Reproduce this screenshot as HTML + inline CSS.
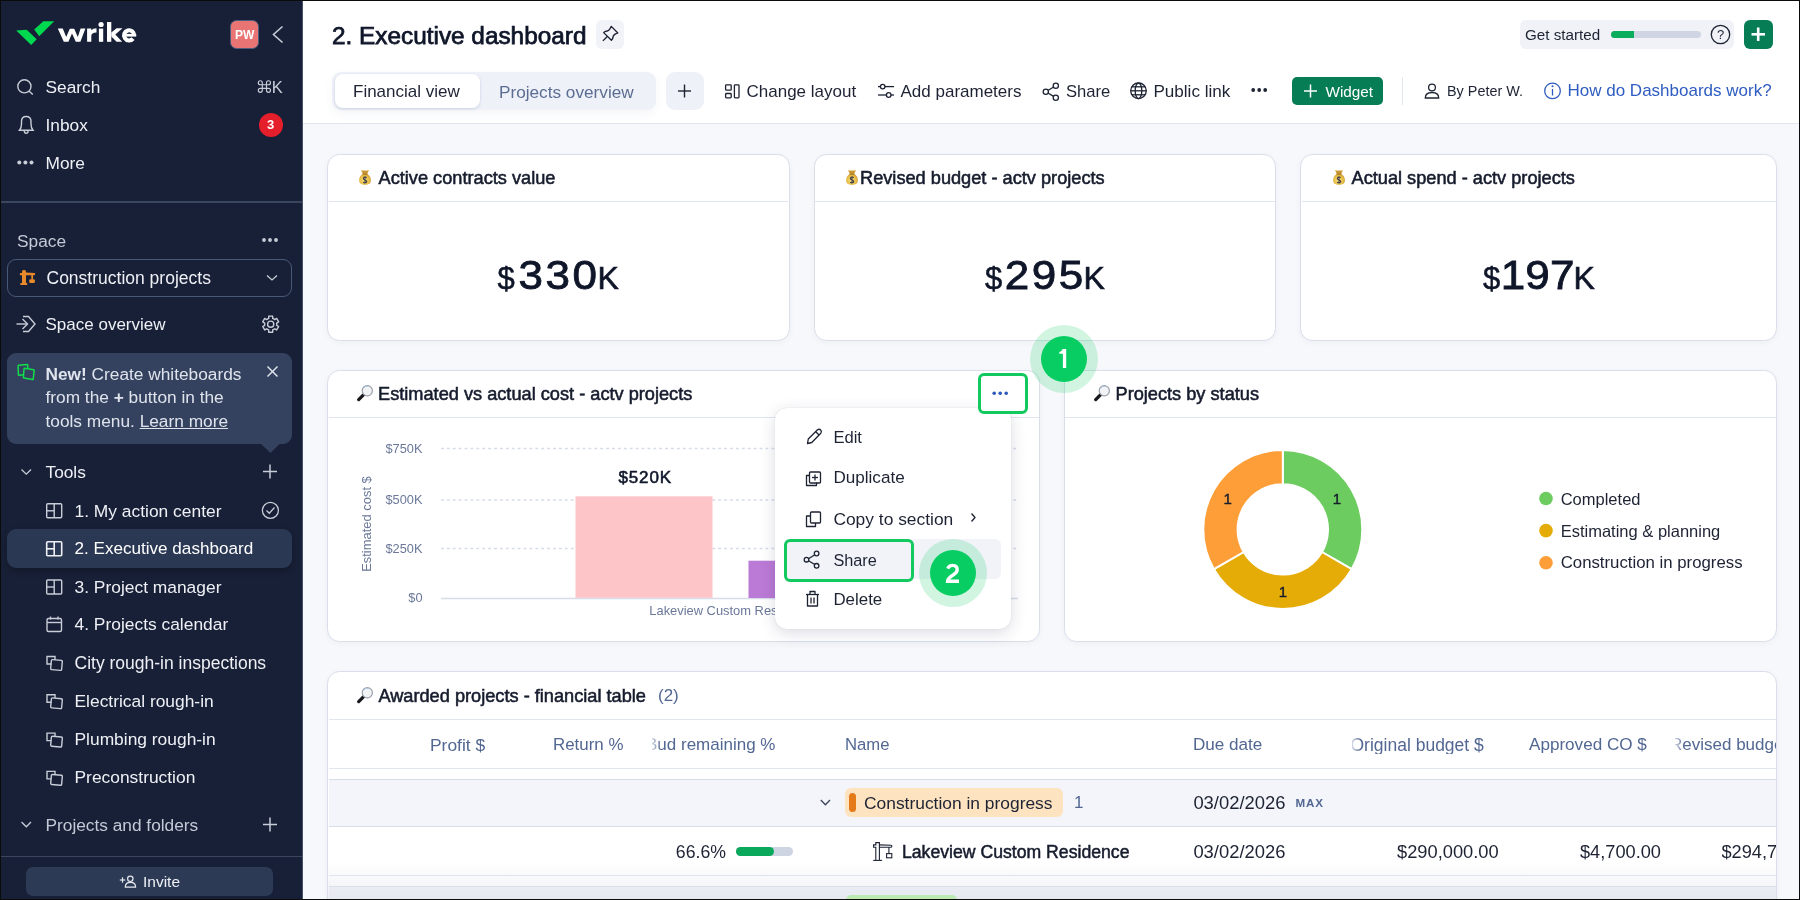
<!DOCTYPE html>
<html><head><meta charset="utf-8">
<style>
*{box-sizing:border-box;margin:0;padding:0}
html,body{width:1800px;height:900px;overflow:hidden;background:#0b0b0b}
body{font-family:"Liberation Sans",sans-serif;position:relative}
.a{position:absolute}
.t{position:absolute;white-space:nowrap;line-height:20px;height:20px}
svg{position:absolute;overflow:visible}
.card{position:absolute;background:#fff;border:1.4px solid #d9deea;border-radius:12.5px;box-shadow:0 2px 6px rgba(30,40,80,.04)}
.ct{font-weight:normal;font-size:18.2px;color:#161c2d;-webkit-text-stroke:.55px #161c2d}
.kb{font-size:31px;line-height:40px;height:40px;color:#0f1629;-webkit-text-stroke:.5px #0f1629}
.kd{font-size:44px;line-height:44px;height:44px;color:#0f1629;letter-spacing:2.5px;-webkit-text-stroke:.9px #0f1629;transform:scaleY(.94);transform-origin:0 37.2px}
.kk{font-size:32px;line-height:40px;height:40px;color:#0f1629;-webkit-text-stroke:.6px #0f1629}
</style></head><body><div id="root" style="position:absolute;left:0;top:0;width:1800px;height:900px;will-change:transform">
<div class="a" style="left:1px;top:1px;width:1798px;height:898px;background:#f7f8fb"></div>
<!-- SIDEBAR -->
<div class="a" style="left:1px;top:1px;width:301px;height:898px;background:#182037"></div>
<svg style="left:0;top:0" width="1" height="1"><polygon points="16.2,30.4 26.7,29.8 36.7,39.2 31.2,45" fill="#00d94f"/><polygon points="34.2,29.6 43.3,21.2 54.2,21.2 39.2,36.2" fill="#00d94f"/></svg>
<svg style="left:0;top:0" width="1" height="1" fill="#fff">
<polygon points="57.8,28.4 62.8,28.4 66.2,37 69.8,28.8 74.2,28.8 77.8,37 80.6,28.4 85.4,28.4 80.4,41.8 75.8,41.8 72,33.4 68.4,41.8 63.8,41.8"/>
<path d="M87.1,28.6 L91.3,28.6 L91.3,30.3 Q92.8,28.2 96.5,28.2 L96.5,32.4 Q91.3,32.4 91.3,36 L91.3,41.8 L87.1,41.8 Z"/>
<circle cx="101.1" cy="24.5" r="2.6"/><rect x="98.9" y="28.6" width="4.3" height="13.2"/>
<rect x="107" y="22" width="4.3" height="19.8"/><polygon points="111.3,32.6 116.6,28.3 122.5,28.3 115.3,34.6 122.2,41.8 116.6,41.8 111.3,36.6"/>
</svg>
<svg style="left:0;top:0" width="1" height="1"><path d="M133,38.6 A5.05,5.05 0 1 1 134.15,35.6" stroke="#fff" stroke-width="4.1" fill="none"/><rect x="124" y="33.9" width="12.2" height="2.7" fill="#fff"/></svg>
<div class="a" style="left:230.4px;top:20.2px;width:28.5px;height:28.6px;border-radius:6.5px;background:#e87474;border:1px solid #4a5f80"></div>
<div class="t" style="left:230.5px;top:24.5px;width:28.5px;text-align:center;font-size:12px;font-weight:bold;color:#fff">PW</div>
<svg style="left:0;top:0" width="1" height="1"><polyline points="282.5,26.5 273.5,34.5 282.5,42.5" fill="none" stroke="#c8cdda" stroke-width="1.6"/></svg>

<svg style="left:0;top:0" width="1" height="1" fill="none" stroke="#c8cdd8" stroke-width="1.4">
<circle cx="24.4" cy="86.3" r="6.6"/><line x1="29.2" y1="91.2" x2="32.8" y2="94.6"/>
<path d="M19.5,130.3 L33,130.3 Q31,128 31,124 L31,121.5 Q31,116.5 26.2,116.5 Q21.5,116.5 21.5,121.5 L21.5,124 Q21.5,128 19.5,130.3 Z"/><path d="M24.3,131 Q24.3,133.3 26.2,133.3 Q28.1,133.3 28.1,131"/>
</svg>
<svg style="left:0;top:0" width="1" height="1" fill="#c8cdd8"><circle cx="19.3" cy="162.5" r="2"/><circle cx="25.4" cy="162.5" r="2"/><circle cx="31.5" cy="162.5" r="2"/></svg>
<div class="t" style="left:45.5px;top:77px;font-size:17.3px;color:#eef0f5">Search</div>
<svg style="left:0;top:0" width="1" height="1" fill="none" stroke="#c8cdd8" stroke-width="1.15"><path d="M262.3,82.7 A2,2 0 1 0 260.3,84.7 M266.5,82.7 A2,2 0 1 1 268.5,84.7 M260.3,88.3 A2,2 0 1 0 262.3,90.3 M268.5,88.3 A2,2 0 1 1 266.5,90.3 M262.3,82.7 V90.3 M266.5,82.7 V90.3 M260.3,84.7 H268.5 M260.3,88.3 H268.5"/></svg>
<div class="t" style="left:271.7px;top:77px;font-size:16.5px;color:#c8cdd8">K</div>
<div class="t" style="left:45.5px;top:115px;font-size:17.3px;color:#eef0f5">Inbox</div>
<div class="a" style="left:258.5px;top:113px;width:24px;height:24px;border-radius:50%;background:#e41e2b"></div>
<div class="t" style="left:258.5px;top:115px;width:24px;text-align:center;font-size:13px;font-weight:bold;color:#fff">3</div>
<div class="t" style="left:45.5px;top:153px;font-size:17.3px;color:#eef0f5">More</div>
<div class="a" style="left:1px;top:201px;width:301px;height:2px;background:#3a465e"></div>

<div class="t" style="left:17px;top:230.5px;font-size:17.3px;color:#c3c9d6">Space</div>
<svg style="left:0;top:0" width="1" height="1" fill="#c8cdd8"><circle cx="264" cy="240" r="1.9"/><circle cx="270" cy="240" r="1.9"/><circle cx="276" cy="240" r="1.9"/></svg>
<div class="a" style="left:7px;top:258.5px;width:285px;height:38px;border-radius:9px;border:1px solid #4a5877"></div>
<svg style="left:0;top:0" width="1" height="1" fill="#e8892a">
<path d="M22,271.5 Q22,270 23.5,270 L24.5,270 Q26,270 26,271.5 L26,283 L27.2,283 L27.2,285 L20.4,285 L20.4,283 L22,283 L22,275.3 L19.9,275.3 L19.9,273 L22,273 Z"/>
<path d="M26,272.6 L34.5,273 Q35,273 35,273.6 L35,274.6 Q35,275.2 34.5,275.2 L26,275.2 Z"/>
<rect x="31.3" y="275" width="1.7" height="4.5"/><rect x="29.2" y="279.2" width="5.7" height="3.8" rx="1.3"/>
</svg>
<div class="t" style="left:46.5px;top:267.8px;font-size:17.5px;color:#eef0f5">Construction projects</div>
<svg style="left:0;top:0" width="1" height="1"><polyline points="267,275.5 272,280 277,275.5" fill="none" stroke="#c8cdda" stroke-width="1.3"/></svg>

<svg style="left:0;top:0" width="1" height="1" fill="none" stroke="#c8cdd8" stroke-width="1.4">
<line x1="16.5" y1="324" x2="27" y2="324"/><polyline points="22.5,319 27.5,324 22.5,329"/><path d="M23,316.5 L28.5,316.5 L35,324 L28.5,331.5 L23,331.5"/>
</svg>
<div class="t" style="left:45.5px;top:314.8px;font-size:17px;color:#eef0f5">Space overview</div>
<svg style="left:0;top:0" width="1" height="1" fill="none" stroke="#c8cdd8" stroke-width="1.4">
<circle cx="270.7" cy="324.2" r="3.1"/>
<path stroke-linejoin="round" d="M267.65,318.92 L268.71,318.43 L268.69,316.15 L272.71,316.15 L272.69,318.43 L273.75,318.92 L274.70,319.60 L276.67,318.43 L278.68,321.91 L276.69,323.04 L276.80,324.20 L276.69,325.36 L278.68,326.49 L276.67,329.97 L274.70,328.80 L273.75,329.48 L272.69,329.97 L272.71,332.25 L268.69,332.25 L268.71,329.97 L267.65,329.48 L266.70,328.80 L264.73,329.97 L262.72,326.49 L264.71,325.36 L264.60,324.20 L264.71,323.04 L262.72,321.91 L264.73,318.43 L266.70,319.60 Z"/>
</svg>

<div class="a" style="left:7px;top:353px;width:285px;height:90.5px;border-radius:9px;background:#34425f"></div>
<svg style="left:0;top:0" width="1" height="1"><polygon points="260,443 280.5,443 270.5,453" fill="#34425f"/></svg>
<svg style="left:0;top:0" width="1" height="1" fill="none" stroke="#22c55e" stroke-width="1.5">
<path d="M23.6,374.8 L19,375.3 Q18.4,375.3 18.4,374.7 L18.1,366 Q18.1,365.4 18.7,365.3 L27,364.5 Q27.6,364.5 27.7,365.1 L27.9,368.4" stroke="#12dd4c"/><path d="M24.7,368.3 L33.5,369.7 Q34.2,369.8 34.1,370.5 L33.3,378.8 Q33.2,379.5 32.5,379.4 L24,378 Q23.3,377.9 23.4,377.2 L24,368.9 Q24.1,368.2 24.7,368.3 Z" stroke="#12dd4c"/>
</svg>
<div class="t" style="left:45.5px;top:363.7px;font-size:17.3px;color:#dfe3ec"><b>New!</b> Create whiteboards</div>
<div class="t" style="left:45.5px;top:387.3px;font-size:17.3px;color:#dfe3ec">from the <b>+</b> button in the</div>
<div class="t" style="left:45.5px;top:411px;font-size:17.3px;color:#dfe3ec">tools menu. <span style="text-decoration:underline">Learn more</span></div>
<svg style="left:0;top:0" width="1" height="1" fill="none" stroke="#dfe3ec" stroke-width="1.5"><line x1="267.5" y1="366.5" x2="277.5" y2="376.5"/><line x1="277.5" y1="366.5" x2="267.5" y2="376.5"/></svg>

<svg style="left:0;top:0" width="1" height="1" fill="none" stroke="#c8cdda" stroke-width="1.3"><polyline points="21.5,469.5 26.3,474.2 31,469.5"/><polyline points="21.5,822 26.3,826.8 31,822"/></svg>
<div class="t" style="left:45.5px;top:462px;font-size:17.3px;color:#eef0f5">Tools</div>
<svg style="left:0;top:0" width="1" height="1" fill="none" stroke="#c8cdd8" stroke-width="1.5"><line x1="263" y1="471.5" x2="277" y2="471.5"/><line x1="270" y1="464.5" x2="270" y2="478.5"/><line x1="263" y1="824.5" x2="277" y2="824.5"/><line x1="270" y1="817.5" x2="270" y2="831.5"/></svg>

<div class="a" style="left:7px;top:529px;width:285px;height:38.5px;border-radius:9px;background:#2b3853;box-shadow:0 3px 6px rgba(0,0,0,.25)"></div>
<svg style="left:0;top:0" width="1" height="1" fill="none" stroke="#c8cdd8" stroke-width="1.4">
<rect x="46.7" y="503.8" width="15" height="14" rx="1"/><line x1="54.2" y1="503.8" x2="54.2" y2="517.8"/><line x1="46.7" y1="510.8" x2="54.2" y2="510.8"/>
<rect x="46.7" y="541.8" width="15" height="14" rx="1" stroke="#eef0f5" stroke-width="1.6"/><line x1="54.2" y1="541.8" x2="54.2" y2="555.8" stroke="#eef0f5" stroke-width="1.6"/><line x1="46.7" y1="548.8" x2="54.2" y2="548.8" stroke="#eef0f5" stroke-width="1.6"/>
<rect x="46.7" y="580" width="15" height="14" rx="1"/><line x1="54.2" y1="580" x2="54.2" y2="594"/><line x1="46.7" y1="587" x2="54.2" y2="587"/>
<rect x="47" y="618.5" width="14.5" height="13" rx="1.5"/><line x1="47" y1="622.5" x2="61.5" y2="622.5"/><line x1="50.5" y1="616.5" x2="50.5" y2="619.5"/><line x1="58" y1="616.5" x2="58" y2="619.5"/>
</svg>
<svg style="left:0;top:0" width="1" height="1" fill="none" stroke="#c8cdd8" stroke-width="1.4">
<g id="cpy"><path d="M51.5,664 L47,664 L47,656.5 L55,656.5 L55,660"/><rect x="51" y="660" width="11" height="10" rx="1" transform="rotate(5 56.5 665)"/></g>
<use href="#cpy" y="38.3"/><use href="#cpy" y="76.6"/><use href="#cpy" y="114.9"/>
</svg>
<div class="t" style="left:74.5px;top:500.7px;font-size:17.4px;color:#eef0f5">1. My action center</div>
<div class="t" style="left:74.5px;top:538.5px;font-size:17.1px;color:#fff">2. Executive dashboard</div>
<div class="t" style="left:74.5px;top:577px;font-size:17.4px;color:#eef0f5">3. Project manager</div>
<div class="t" style="left:74.5px;top:614.4px;font-size:17.4px;color:#eef0f5">4. Projects calendar</div>
<div class="t" style="left:74.5px;top:652.7px;font-size:17.5px;color:#eef0f5">City rough-in inspections</div>
<div class="t" style="left:74.5px;top:691px;font-size:17.4px;color:#eef0f5">Electrical rough-in</div>
<div class="t" style="left:74.5px;top:729px;font-size:17.4px;color:#eef0f5">Plumbing rough-in</div>
<div class="t" style="left:74.5px;top:767px;font-size:17.4px;color:#eef0f5">Preconstruction</div>
<svg style="left:0;top:0" width="1" height="1" fill="none" stroke="#c8cdd8" stroke-width="1.3"><circle cx="270.4" cy="510.4" r="8"/><polyline points="266.5,510.5 269.3,513.3 274.5,507.5"/></svg>

<div class="t" style="left:45.5px;top:814.8px;font-size:17.3px;color:#c3c9d6">Projects and folders</div>
<div class="a" style="left:1px;top:855.5px;width:301px;height:1px;background:#3a465e"></div>
<div class="a" style="left:26px;top:867px;width:247px;height:28.5px;border-radius:7px;background:#2c3a55"></div>
<svg style="left:0;top:0" width="1" height="1" fill="none" stroke="#e6e9f0" stroke-width="1.2">
<line x1="119.8" y1="880" x2="125.2" y2="880"/><line x1="122.5" y1="877.3" x2="122.5" y2="882.7"/>
<circle cx="130.3" cy="878.8" r="2.7"/><path d="M125.3,887.2 Q125.3,882.4 130.4,882.4 Q135.6,882.4 135.6,887.2 Z"/>
</svg>
<div class="t" style="left:143px;top:871.7px;font-size:15.5px;color:#eef0f5">Invite</div>
<div class="a" style="left:301.6px;top:1px;width:1.2px;height:898px;background:#46526b"></div>

<!-- HEADER -->
<div class="a" style="left:303px;top:1px;width:1496px;height:123px;background:#fff;border-bottom:1px solid #e1e5ef"></div>
<div class="t" style="left:332px;top:25.6px;line-height:20px;font-size:24.35px;color:#0f1629;-webkit-text-stroke:.75px #0f1629">2. Executive dashboard</div>
<div class="a" style="left:596px;top:20px;width:28px;height:29px;border-radius:6px;background:#f1f3f8"></div>
<svg style="left:0;top:0" width="1" height="1" fill="none" stroke="#1a2030" stroke-width="1.3" stroke-linejoin="round">
<path d="M611.3,26.4 L617.8,33 L615.6,33.8 Q612.9,35 612.7,38.5 L611.4,40.3 L603.7,32.6 L605.5,31.3 Q609,31.1 610.2,28.4 Z"/><line x1="607.3" y1="36.5" x2="602.9" y2="40.9"/>
</svg>

<div class="a" style="left:332px;top:71.7px;width:324px;height:38.3px;border-radius:9px;background:#eef1f8;box-shadow:0 4px 10px rgba(60,80,140,.05)"></div>
<div class="a" style="left:334.5px;top:74px;width:145px;height:34px;border-radius:8px;background:#fff;box-shadow:0 1px 3px rgba(40,60,120,.18)"></div>
<div class="t" style="left:353px;top:81.7px;font-size:17px;color:#1d2333">Financial view</div>
<div class="t" style="left:499px;top:81.7px;font-size:17.2px;color:#5c6d93">Projects overview</div>
<div class="a" style="left:666px;top:71.7px;width:38px;height:38.3px;border-radius:9px;background:#eef1f8"></div>
<svg style="left:0;top:0" width="1" height="1" fill="none" stroke="#1d2333" stroke-width="1.4"><line x1="678" y1="91" x2="691" y2="91"/><line x1="684.5" y1="84.5" x2="684.5" y2="97.5"/></svg>

<svg style="left:0;top:0" width="1" height="1" fill="none" stroke="#1d2333" stroke-width="1.3">
<rect x="725.6" y="84.8" width="5.6" height="5.4" rx=".8"/><rect x="725.6" y="93.5" width="5.6" height="4.4" rx=".8"/><rect x="734.4" y="84.8" width="4.6" height="13.1" rx=".8"/>
<line x1="878" y1="86.6" x2="894" y2="86.6"/><circle cx="882.7" cy="86.6" r="2.3" fill="#fff"/>
<line x1="878" y1="95" x2="894" y2="95"/><circle cx="888.7" cy="95" r="2.3" fill="#fff"/>
<line x1="1047.5" y1="90.7" x2="1054" y2="86.8"/><line x1="1047.5" y1="92.7" x2="1054" y2="96.6"/>
<circle cx="1045.8" cy="91.7" r="2.6" fill="#fff"/><circle cx="1055.8" cy="85.8" r="2.6" fill="#fff"/><circle cx="1055.8" cy="97.7" r="2.6" fill="#fff"/>
<circle cx="1138.5" cy="90.8" r="7.8"/><ellipse cx="1138.5" cy="90.8" rx="3.3" ry="7.8"/><line x1="1130.7" y1="90.8" x2="1146.3" y2="90.8"/><line x1="1131.8" y1="86.8" x2="1145.2" y2="86.8"/><line x1="1131.8" y1="94.8" x2="1145.2" y2="94.8"/>
</svg>
<div class="t" style="left:746.5px;top:81.7px;font-size:17px;color:#1d2333">Change layout</div>
<div class="t" style="left:900.5px;top:81.7px;font-size:17px;color:#1d2333">Add parameters</div>
<div class="t" style="left:1066px;top:81.7px;font-size:16.6px;color:#1d2333">Share</div>
<div class="t" style="left:1153.4px;top:81.7px;font-size:17.1px;color:#1d2333">Public link</div>
<svg style="left:0;top:0" width="1" height="1" fill="#1d2333"><circle cx="1253.2" cy="90" r="1.9"/><circle cx="1259.2" cy="90" r="1.9"/><circle cx="1265.2" cy="90" r="1.9"/></svg>
<div class="a" style="left:1292px;top:77px;width:91px;height:28px;border-radius:5px;background:#077d55"></div>
<svg style="left:0;top:0" width="1" height="1" fill="none" stroke="#fff" stroke-width="1.5"><line x1="1304" y1="91" x2="1317" y2="91"/><line x1="1310.5" y1="84.5" x2="1310.5" y2="97.5"/></svg>
<div class="t" style="left:1325.5px;top:81.7px;font-size:15.3px;color:#fff">Widget</div>
<div class="a" style="left:1402px;top:77px;width:1px;height:28px;background:#e1e5ef"></div>
<svg style="left:0;top:0" width="1" height="1" fill="none" stroke="#1d2333" stroke-width="1.3"><circle cx="1432" cy="87.5" r="3.4"/><path d="M1425.3,98 Q1425.3,92.5 1432,92.5 Q1438.7,92.5 1438.7,98 Z"/></svg>
<div class="t" style="left:1447px;top:81.3px;font-size:14.4px;color:#1d2333">By Peter W.</div>
<svg style="left:0;top:0" width="1" height="1" fill="none" stroke="#2f5cc0" stroke-width="1.3"><circle cx="1552.5" cy="90.9" r="7.8"/><line x1="1552.5" y1="89" x2="1552.5" y2="95.5"/></svg>
<svg style="left:0;top:0" width="1" height="1" fill="#2f5cc0"><circle cx="1552.5" cy="86.3" r="1"/></svg>
<div class="t" style="left:1567.5px;top:81.3px;font-size:17px;color:#2f5cc0">How do Dashboards work?</div>

<div class="a" style="left:1520px;top:20px;width:214px;height:28.5px;border-radius:6px;background:#f0f2f8"></div>
<div class="t" style="left:1525px;top:24.5px;font-size:15.2px;color:#1d2333">Get started</div>
<div class="a" style="left:1610.5px;top:31px;width:90.5px;height:7px;border-radius:4px;background:#cfd5e3"></div>
<div class="a" style="left:1610.5px;top:31px;width:23px;height:7px;border-radius:4px 0 0 4px;background:#0aad5c"></div>
<svg style="left:0;top:0" width="1" height="1" fill="none" stroke="#1d2333" stroke-width="1.3"><circle cx="1720.5" cy="34.5" r="9.2"/></svg>
<div class="t" style="left:1711px;top:24.5px;width:19px;text-align:center;font-size:13px;color:#1d2333">?</div>
<div class="a" style="left:1744px;top:20px;width:28.5px;height:28.5px;border-radius:6px;background:#077d55"></div>
<svg style="left:0;top:0" width="1" height="1" fill="none" stroke="#fff" stroke-width="2.6"><line x1="1751.5" y1="34.3" x2="1765" y2="34.3"/><line x1="1758.2" y1="27.5" x2="1758.2" y2="41"/></svg>

<!-- SYMBOLS -->
<svg width="0" height="0" style="position:absolute">
<defs>
<radialGradient id="bagg" cx=".45" cy=".62" r=".6"><stop offset="0" stop-color="#f7df7e"/><stop offset=".7" stop-color="#e6bb45"/><stop offset="1" stop-color="#c99430"/></radialGradient>
<symbol id="bag" viewBox="0 0 12 15" overflow="visible">
<path d="M3.9,3.4 Q3.9,4 3,4.6 Q0.1,6.6 0.1,10.6 Q0.1,14.9 6,14.9 Q11.9,14.9 11.9,10.6 Q11.9,6.6 9,4.6 Q8.1,4 8.1,3.4 Z" fill="url(#bagg)"/>
<path d="M2,0.2 Q6,1 10,0.2 L8.3,3.8 Q6,4.4 3.7,3.8 Z" fill="#d3a23c"/>
<path d="M4.6,1 L5.2,3.7 M7.3,1 L6.8,3.7" stroke="#a8741f" stroke-width=".6" fill="none"/>
<path d="M3.6,3.9 Q6,4.6 8.4,3.9" stroke="#9c6a1c" stroke-width=".8" fill="none"/>
<path d="M7.7,7.7 Q6.9,6.9 5.9,7 Q4.4,7.1 4.4,8.4 Q4.4,9.6 6,9.9 Q7.7,10.3 7.7,11.6 Q7.6,12.9 6,12.9 Q4.9,12.9 4.2,12.1 M6,6.2 L6,13.6" stroke="#3b3d4a" stroke-width="1.05" fill="none"/>
</symbol>
<symbol id="mag" viewBox="0 0 17 16" overflow="visible">
<line x1="7.4" y1="9.9" x2="2.7" y2="14.6" stroke="#16181d" stroke-width="3.3" stroke-linecap="round"/>
<circle cx="11.3" cy="5.7" r="5.1" fill="#f2f3f5" stroke="#9ba1ab" stroke-width="1.2"/>
<path d="M7.6,3.2 A4.3,4.3 0 0 1 12.8,1.4" stroke="#9fc3e8" stroke-width=".8" fill="none"/>
</symbol>
</defs>
</svg>

<!-- ROW 1 -->
<div class="card" style="left:327px;top:153.5px;width:462.5px;height:187px"></div>
<div class="card" style="left:813.5px;top:153.5px;width:462.5px;height:187px"></div>
<div class="card" style="left:1300.3px;top:153.5px;width:477px;height:187px"></div>
<div class="a" style="left:329px;top:201px;width:459px;height:1.3px;background:#e1e5ef"></div>
<div class="a" style="left:815px;top:201px;width:459.5px;height:1.3px;background:#e1e5ef"></div>
<div class="a" style="left:1302px;top:201px;width:474px;height:1.3px;background:#e1e5ef"></div>
<svg style="left:359px;top:170px" width="12" height="15"><use href="#bag"/></svg>
<svg style="left:846px;top:170px" width="12" height="15"><use href="#bag"/></svg>
<svg style="left:1333px;top:170px" width="12" height="15"><use href="#bag"/></svg>
<div class="t ct" style="left:378.5px;top:167.6px">Active contracts value</div>
<div class="t ct" style="left:860px;top:167.6px">Revised budget - actv projects</div>
<div class="t ct" style="left:1351.5px;top:167.6px">Actual spend - actv projects</div>
<div class="t kb" style="left:497.5px;top:259px">$</div><div class="t kd" style="left:518.5px;top:252.3px">330</div><div class="t kk" style="left:597.6px;top:257.5px">K</div>
<div class="t kb" style="left:985px;top:259px">$</div><div class="t kd" style="left:1004.7px;top:252.3px">295</div><div class="t kk" style="left:1083.6px;top:257.5px">K</div>
<div class="t kb" style="left:1483px;top:259px">$</div><div class="t kd" style="left:1500.7px;top:252.3px;letter-spacing:.2px">197</div><div class="t kk" style="left:1573.6px;top:257.5px">K</div>

<!-- ROW 2 -->
<div class="card" style="left:327px;top:369.5px;width:713px;height:272.5px"></div>
<div class="card" style="left:1063.8px;top:369.5px;width:713.5px;height:272.5px"></div>
<div class="a" style="left:329px;top:417px;width:710px;height:1.3px;background:#e1e5ef"></div>
<div class="a" style="left:1065px;top:417px;width:711px;height:1.3px;background:#e1e5ef"></div>
<svg style="left:356px;top:385px" width="17" height="16"><use href="#mag"/></svg>
<svg style="left:1093px;top:385px" width="17" height="16"><use href="#mag"/></svg>
<div class="t ct" style="left:378px;top:384.3px">Estimated vs actual cost - actv projects</div>
<div class="t ct" style="left:1115.5px;top:384.3px">Projects by status</div>

<!-- chart -->
<svg style="left:0;top:0" width="1" height="1">
<g stroke="#d6dce7" stroke-width="1.5" stroke-dasharray="2.8 3.1">
<line x1="441" y1="448.6" x2="1018" y2="448.6"/><line x1="441" y1="500" x2="1018" y2="500"/><line x1="441" y1="548.5" x2="1018" y2="548.5"/>
</g>
<line x1="441" y1="598.5" x2="1018" y2="598.5" stroke="#d7dce7" stroke-width="1.5"/>
<rect x="575.5" y="496.3" width="137" height="101.5" fill="#fec5c9"/>
<rect x="748.5" y="560.7" width="30" height="37.3" fill="#bb7ad6"/>
</svg>
<div class="t" style="left:385px;top:439.2px;width:37.5px;text-align:right;font-size:12.8px;color:#6b7899">$750K</div>
<div class="t" style="left:385px;top:489.5px;width:37.5px;text-align:right;font-size:12.8px;color:#6b7899">$500K</div>
<div class="t" style="left:385px;top:538.5px;width:37.5px;text-align:right;font-size:12.8px;color:#6b7899">$250K</div>
<div class="t" style="left:385px;top:588.4px;width:37.5px;text-align:right;font-size:12.8px;color:#6b7899">$0</div>
<div class="t" style="left:618.5px;top:468px;font-size:17px;letter-spacing:.85px;color:#0f1629;-webkit-text-stroke:.55px #0f1629">$520K</div>
<div class="t" style="left:649.3px;top:600.5px;font-size:12.9px;color:#6b7899">Lakeview Custom Residence</div>
<div class="t" style="left:318.5px;top:514px;width:95.7px;text-align:center;font-size:12.95px;color:#6b7899;transform:rotate(-90deg)">Estimated cost $</div>

<!-- donut -->
<svg style="left:0;top:0" width="1" height="1">
<g transform="translate(1282.8 529.4)" stroke="#fff" stroke-width="2">
<path d="M0,-79.5 A79.5,79.5 0 0 1 68.85,39.75 L39.14,22.6 A45.2,45.2 0 0 0 0,-45.2 Z" fill="#6dcc5f"/>
<path d="M68.85,39.75 A79.5,79.5 0 0 1 -68.85,39.75 L-39.14,22.6 A45.2,45.2 0 0 0 39.14,22.6 Z" fill="#e5ac07"/>
<path d="M-68.85,39.75 A79.5,79.5 0 0 1 0,-79.5 L0,-45.2 A45.2,45.2 0 0 0 -39.14,22.6 Z" fill="#fe9e38"/>
</g>
<circle cx="1546" cy="498.5" r="6.8" fill="#6dcc5f"/><circle cx="1546" cy="530.6" r="6.8" fill="#e5ac07"/><circle cx="1546" cy="562.7" r="6.8" fill="#fe9e38"/>
</svg>
<div class="t" style="left:1322px;top:488.5px;width:30px;text-align:center;font-size:15px;color:#161c2d;-webkit-text-stroke:.4px #161c2d">1</div>
<div class="t" style="left:1212.7px;top:488.5px;width:30px;text-align:center;font-size:15px;color:#161c2d;-webkit-text-stroke:.4px #161c2d">1</div>
<div class="t" style="left:1267.8px;top:582.3px;width:30px;text-align:center;font-size:15px;color:#161c2d;-webkit-text-stroke:.4px #161c2d">1</div>
<div class="t" style="left:1560.7px;top:488.5px;font-size:16.5px;color:#1d2333">Completed</div>
<div class="t" style="left:1560.7px;top:520.6px;font-size:16.5px;color:#1d2333">Estimating &amp; planning</div>
<div class="t" style="left:1560.7px;top:552.7px;font-size:16.8px;color:#1d2333">Construction in progress</div>

<!-- TABLE -->
<div class="card" style="left:327px;top:670.8px;width:1450px;height:260px"></div>
<div class="a" style="left:329px;top:719px;width:1447px;height:1.3px;background:#e1e5ef"></div>
<svg style="left:356px;top:687px" width="17" height="16"><use href="#mag"/></svg>
<div class="t ct" style="left:378.4px;top:686px">Awarded projects - financial table</div>
<div class="t" style="left:658px;top:686px;font-size:17px;color:#526792">(2)</div>
<div class="a" style="left:329px;top:768px;width:1447px;height:1.2px;background:#e1e5ef"></div>
<div class="a" style="left:329px;top:778.5px;width:1447px;height:48px;background:#f3f5fa;border-top:1.3px solid #d8dee9;border-bottom:1.3px solid #d8dee9"></div>
<div class="a" style="left:329px;top:875px;width:1447px;height:1.2px;background:#e1e5ef"></div>
<div class="a" style="left:329px;top:885.5px;width:1447px;height:14px;background:#f0f2f7;border-top:1.3px solid #d8dee9"></div>
<div class="t" style="left:430px;top:734.8px;font-size:17.4px;color:#526792">Profit $</div>
<div class="t" style="left:553px;top:734.8px;font-size:16.9px;color:#526792">Return %</div>
<div class="a" style="left:652px;top:724px;width:150px;height:30px;overflow:hidden;-webkit-mask-image:linear-gradient(to right,rgba(0,0,0,.25),#000 9px)"><div class="t" style="left:-6px;top:10.8px;font-size:17px;color:#526792">Bud remaining %</div></div>
<div class="t" style="left:845px;top:734.8px;font-size:16.7px;color:#526792">Name</div>
<div class="t" style="left:1193px;top:734.8px;font-size:17.1px;color:#526792">Due date</div>
<div class="a" style="left:1352px;top:724px;width:160px;height:30px;overflow:hidden;-webkit-mask-image:linear-gradient(to right,rgba(0,0,0,.25),#000 9px)"><div class="t" style="left:-1.5px;top:10.8px;font-size:17.5px;color:#526792">Original budget $</div></div>
<div class="t" style="left:1529px;top:734.8px;font-size:17.1px;color:#526792">Approved CO $</div>
<div class="a" style="left:1675px;top:724px;width:101px;height:30px;overflow:hidden;-webkit-mask-image:linear-gradient(to right,rgba(0,0,0,.25),#000 9px)"><div class="t" style="left:-5px;top:10.8px;font-size:17px;color:#526792">Revised budget $</div></div>

<svg style="left:0;top:0" width="1" height="1" fill="none" stroke="#3b4356" stroke-width="1.3"><polyline points="820.8,800 825.4,804.8 830,800"/></svg>
<div class="a" style="left:844.7px;top:788px;width:218.5px;height:28.5px;border-radius:6px;background:#fde3c0"></div>
<div class="a" style="left:849px;top:793px;width:7.3px;height:18.7px;border-radius:3.7px;background:#e57a1b"></div>
<div class="t" style="left:864px;top:792.5px;font-size:17.4px;color:#1d2333">Construction in progress</div>
<div class="t" style="left:1074px;top:792.5px;font-size:17px;color:#526792">1</div>
<div class="t" style="left:1193.4px;top:792.5px;font-size:18.4px;color:#1d2333">03/02/2026</div>
<div class="t" style="left:1295.5px;top:792.5px;font-size:11.6px;font-weight:bold;letter-spacing:.9px;color:#526792">MAX</div>

<div class="t" style="left:675.8px;top:842px;font-size:17.7px;color:#1d2333">66.6%</div>
<div class="a" style="left:735.8px;top:846.7px;width:57.2px;height:9px;border-radius:4.5px;background:#ced5e2"></div>
<div class="a" style="left:735.8px;top:846.7px;width:38.4px;height:9px;border-radius:4.5px;background:#0aa85a"></div>
<svg style="left:0;top:0" width="1" height="1" fill="none" stroke="#1d2333" stroke-width="1.1">
<path d="M875.8,860 L875.8,847.2 L873.6,847.2 L873.6,844.9 L875.8,844.9 L875.8,842.6 L879.4,842.6 L879.4,860"/>
<path d="M879.4,844.9 L891.2,845.3 Q891.8,845.3 891.8,845.9 L891.8,846.6 Q891.8,847.2 891.2,847.2 L879.4,847.2"/>
<line x1="888.9" y1="847.2" x2="888.9" y2="853.6"/><rect x="886.6" y="853.6" width="5.2" height="4.2"/>
<line x1="873.2" y1="860.4" x2="882.1" y2="860.4"/>
</svg>
<div class="t" style="left:902px;top:841.8px;font-size:17.65px;color:#161c2d;-webkit-text-stroke:.5px #161c2d">Lakeview Custom Residence</div>
<div class="t" style="left:1193.4px;top:842px;font-size:18.4px;color:#1d2333">03/02/2026</div>
<div class="t" style="left:1397px;top:842px;font-size:18.3px;color:#1d2333">$290,000.00</div>
<div class="t" style="left:1580px;top:842px;font-size:18.2px;color:#1d2333">$4,700.00</div>
<div class="a" style="left:1721.5px;top:830px;width:54.5px;height:30px;overflow:hidden"><div class="t" style="left:0;top:12px;font-size:18.2px;color:#1d2333">$294,700.00</div></div>
<div class="a" style="left:328px;top:862px;width:1448px;height:37px;background:linear-gradient(rgba(220,223,232,0),rgba(220,223,232,.45))"></div>
<div class="a" style="left:846px;top:895.3px;width:110.7px;height:10px;border-radius:6px;background:#bde9b3"></div>

<!-- MENU + OVERLAYS -->
<div class="a" style="left:775.3px;top:408px;width:235.5px;height:221px;border-radius:12px;background:#fff;box-shadow:0 4px 16px rgba(30,40,80,.16),0 0 1px rgba(30,40,80,.2)"></div>
<div class="a" style="left:784px;top:539px;width:217px;height:40px;border-radius:6px;background:#f1f3f9"></div>
<svg style="left:0;top:0" width="1" height="1" fill="none" stroke="#1d2333" stroke-width="1.3" stroke-linejoin="round">
<path d="M807.5,443.5 L808.3,439 L817.5,429.8 Q819.4,428.6 820.8,430.2 Q822,431.8 820.8,433.2 L811.8,442.5 Z"/><line x1="815.8" y1="431.8" x2="819" y2="435"/>
<path d="M809.5,475.5 L806.5,475.5 L806.5,485.5 L816.5,485.5 L816.5,482.5"/><rect x="809.5" y="472" width="11" height="11" rx="1"/><line x1="815" y1="474.5" x2="815" y2="480.5"/><line x1="812" y1="477.5" x2="818" y2="477.5"/>
<path d="M810.5,516 L806.5,516 L806.5,526.5 L815.5,526.5 L815.5,523"/><rect x="810.5" y="512" width="10" height="11" rx="1"/>
<polyline points="971.5,513.5 975,517.5 971.5,521.5"/>
<line x1="808.5" y1="558.7" x2="815.3" y2="554.5"/><line x1="808.5" y1="560.7" x2="815.3" y2="564.7"/>
<circle cx="806.5" cy="559.7" r="2.3" fill="#f1f3f9"/><circle cx="816.6" cy="553.5" r="2.3" fill="#f1f3f9"/><circle cx="816.6" cy="565.8" r="2.3" fill="#f1f3f9"/>
<line x1="806" y1="594.5" x2="819" y2="594.5"/><path d="M810,594.5 L810,591.5 L815,591.5 L815,594.5"/><path d="M807.5,594.5 L807.5,606 L817.5,606 L817.5,594.5"/><line x1="811" y1="597.5" x2="811" y2="603.5"/><line x1="814" y1="597.5" x2="814" y2="603.5"/>
</svg>
<div class="t" style="left:833.4px;top:427.5px;font-size:16.6px;color:#1d2333">Edit</div>
<div class="t" style="left:833.4px;top:468px;font-size:17.1px;color:#1d2333">Duplicate</div>
<div class="t" style="left:833.4px;top:509px;font-size:17.4px;color:#1d2333">Copy to section</div>
<div class="t" style="left:833.4px;top:549.5px;font-size:16.3px;color:#1d2333">Share</div>
<div class="t" style="left:833.4px;top:590px;font-size:16.9px;color:#1d2333">Delete</div>

<!-- highlight boxes -->
<div class="a" style="left:978.3px;top:373px;width:49.5px;height:40.7px;border-radius:6px;border:3.3px solid #12c960;background:#fff"></div>
<svg style="left:0;top:0" width="1" height="1" fill="#2a58b8"><circle cx="994.2" cy="393.3" r="1.8"/><circle cx="1000.2" cy="393.3" r="1.8"/><circle cx="1006.2" cy="393.3" r="1.8"/></svg>
<div class="a" style="left:783.5px;top:539px;width:130px;height:42.5px;border-radius:6px;border:3.3px solid #12c960"></div>

<!-- step circles -->
<div class="a" style="left:1029.7px;top:324.5px;width:68px;height:68px;border-radius:50%;background:rgba(12,200,98,.19)"></div>
<div class="a" style="left:1040.7px;top:335.5px;width:46px;height:46px;border-radius:50%;background:#08cd62"></div>
<svg style="left:0;top:0" width="1" height="1"><path d="M1062.6,349 L1066.2,349 L1066.2,368 L1062.9,368 L1062.9,353.8 L1059.3,353.8 L1059.3,352.2 Q1061.6,351.8 1062.6,349 Z" fill="#fff"/></svg>
<div class="a" style="left:918.5px;top:539px;width:68px;height:68px;border-radius:50%;background:rgba(12,200,98,.19)"></div>
<div class="a" style="left:929.5px;top:550px;width:46px;height:46px;border-radius:50%;background:#08cd62"></div>
<svg style="left:0;top:0" width="1" height="1"><path d="M947.7,568.6 Q949.2,565.4 952.6,565.4 Q957.2,565.4 957.2,569.8 Q957.2,572.6 953.4,574.8 Q947.8,578.2 947.6,581.2 L959,581.2" fill="none" stroke="#fff" stroke-width="3.4"/></svg>
<!-- FRAME -->
<div class="a" style="left:0;top:0;width:1800px;height:1px;background:#0b0b0b"></div>
<div class="a" style="left:0;top:899px;width:1800px;height:1px;background:#0b0b0b"></div>
<div class="a" style="left:0;top:0;width:1px;height:900px;background:#0b0b0b"></div>
<div class="a" style="left:1799px;top:0;width:1px;height:900px;background:#0b0b0b"></div>

</div></body></html>
